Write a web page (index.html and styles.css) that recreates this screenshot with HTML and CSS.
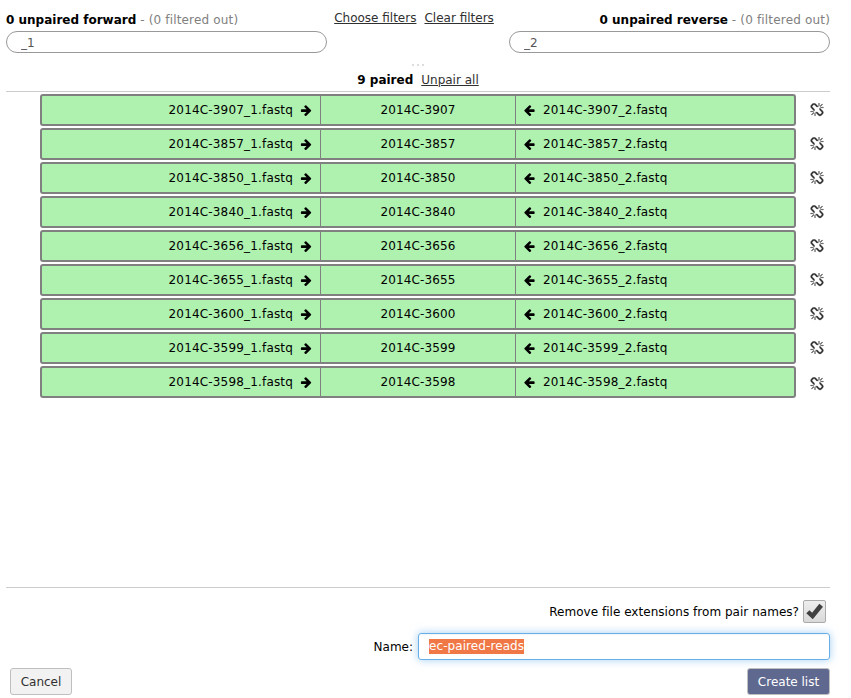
FILE: index.html
```html
<!DOCTYPE html>
<html lang="en">
<head>
<meta charset="utf-8">
<title>Paired list</title>
<link rel="stylesheet" href="styles.css">
</head>
<body>
<svg class="sprites" aria-hidden="true">
  <symbol id="arrow" viewBox="0 0 1792 1792"><path d="M1600 960q0 54-37 91l-651 651q-39 37-91 37-51 0-90-37l-75-75q-38-38-38-91t38-91l293-293h-704q-52 0-84.500-37.500t-32.500-90.500v-128q0-53 32.500-90.500t84.500-37.500h704l-293-294q-38-36-38-90t38-90l75-75q38-38 90-38 53 0 91 38l651 651q37 35 37 90z"/></symbol>
  <symbol id="unlink" viewBox="0 0 1792 1792"><path d="M503 1271l-256 256q-10 9-23 9-12 0-23-9-9-10-9-23t9-23l256-256q10-9 23-9t23 9q9 10 9 23t-9 23zm169 41v320q0 14-9 23t-23 9-23-9-9-23v-320q0-14 9-23t23-9 23 9 9 23zm-224-224q0 14-9 23t-23 9h-320q-14 0-23-9t-9-23 9-23 23-9h320q14 0 23 9t9 23zm1264 128q0 120-85 203l-147 146q-83 83-203 83-121 0-204-85l-334-335q-21-21-42-56l239-18 273 274q27 27 68 27.500t68-26.500l147-146q28-28 28-67 0-40-28-68l-274-275 18-239q35 21 56 42l336 336q84 86 84 204zm-617-724l-239 18-273-274q-28-28-68-28-39 0-68 27l-147 146q-28 28-28 67 0 40 28 68l274 274-18 240q-35-21-56-42l-336-336q-84-86-84-204 0-120 85-203l147-146q83-83 203-83 121 0 204 85l334 335q21 21 42 56zm633 84q0 14-9 23t-23 9h-320q-14 0-23-9t-9-23 9-23 23-9h320q14 0 23 9t9 23zm-544-544v320q0 14-9 23t-23 9-23-9-9-23v-320q0-14 9-23t23-9 23 9 9 23zm407 151l-256 256q-11 9-23 9t-23-9q-9-10-9-23t9-23l256-256q10-9 23-9t23 9q9 10 9 23t-9 23z"/></symbol>
</svg>
<main class="creator">
  <header class="filters">
    <div class="column">
      <div class="title"><b>0 unpaired forward</b> <span class="muted">- (0 filtered out)</span></div>
      <input class="search" type="text" value="_1" aria-label="Forward filter">
    </div>
    <div class="links"><a href="#">Choose filters</a><a href="#">Clear filters</a></div>
    <div class="column reverse">
      <div class="title"><b>0 unpaired reverse</b> <span class="muted">- (0 filtered out)</span></div>
      <input class="search" type="text" value="_2" aria-label="Reverse filter">
    </div>
  </header>
  <div class="grip"><i></i><i></i><i></i></div>
  <div class="paired-title"><b>9 paired</b><a href="#">Unpair all</a></div>
  <ol class="pairs" id="pairs"></ol>
  <footer class="footer">
    <label class="option">Remove file extensions from pair names?
      <span class="check"><svg viewBox="0 0 23 23"><path d="M2.500 13.500 6 10 8.900 12.800 16.800 3 20.800 6.400 9.600 20Z"/></svg></span>
    </label>
    <div class="name-row"><span>Name:</span><div class="name" role="textbox"><span class="selected">ec-paired-reads</span></div></div>
    <div class="actions"><button class="button">Cancel</button><button class="button primary">Create list</button></div>
  </footer>
</main>
<script src="pairs.js"></script>
</body>
</html>
```
FILE: styles.css
```css
* { box-sizing: border-box; }

body {
  margin: 0;
  background: #fff;
  color: #000;
  font: 12px/18px "DejaVu Sans", sans-serif;
}

a { color: #303030; text-decoration: underline; }

.sprites { display: none; }

.creator {
  display: flex;
  flex-direction: column;
  width: 824px;
  height: 698px;
  margin-left: 6px;
}

.filters {
  display: flex;
  justify-content: space-between;
  height: 62px;
  padding-top: 11px;
}

.column { width: 321px; }
.reverse .title { text-align: right; }
.title { height: 20px; }
.muted { color: #808080; letter-spacing: .17px; }

.search {
  display: block;
  width: 321px;
  height: 22px;
  padding: 1px 14px 0;
  border: 1px solid #999;
  border-radius: 11px;
  background: #fff;
  color: #555;
  font: inherit;
}

.links {
  display: flex;
  gap: 8px;
  margin: -2px 8px 0 0;
}

.grip {
  display: flex;
  justify-content: center;
  gap: 3px;
  height: 9px;
  padding-top: 2px;
}

.grip i { width: 2px; height: 2px; background: #ddd; }

.paired-title {
  display: flex;
  justify-content: center;
  gap: 8px;
  height: 20px;
}

.pairs {
  flex: 1;
  margin: 0;
  padding: 0;
  border-top: 1px solid #ccc;
  list-style: none;
}

.pair { display: flex; align-items: center; margin: 2px 0 0 34px; }

.files {
  display: grid;
  grid-template-columns: 278px 196px 278px;
  width: 756px;
  height: 32px;
  border: 2px solid #808080;
  border-radius: 3px;
  background: #aff1af;
  line-height: 28px;
  letter-spacing: .17px;
}

.files > span { display: flex; align-items: center; }
.files .forward { justify-content: flex-end; gap: 7px; padding-right: 7.5px; }
.files .pair-name { justify-content: center; border: solid #808080; border-width: 0 1px; letter-spacing: .1px; }
.files .backward { gap: 7.5px; padding-left: 7px; }
.arrow { width: 12.5px; height: 12.5px; }
.backward .arrow { transform: scaleX(-1); }

.unlink {
  width: 14px;
  height: 14px;
  margin-left: 14px;
  fill: #303030;
  stroke: #303030;
  stroke-width: 40px;
}
.pair:last-child .unlink { margin-top: 4px; }

.footer { height: 111px; border-top: 1px solid #ccc; }

.option {
  display: flex;
  align-items: center;
  justify-content: flex-end;
  gap: 4px;
  height: 23px;
  margin: 12px 4px 0 0;
  letter-spacing: .03px;
}

.check {
  width: 23px;
  height: 23px;
  border: 1px solid #aaa;
  border-radius: 2px;
  background: linear-gradient(#eee, #d9d9d9);
}

.check svg { display: block; width: 21px; height: 21px; fill: #404040; }

.name-row {
  display: flex;
  align-items: center;
  justify-content: flex-end;
  gap: 5px;
  margin-top: 10px;
}

.name {
  width: 412px;
  height: 27px;
  padding: 5px 10px;
  border: 1px solid #66afe9;
  border-radius: 3px;
  box-shadow: inset 0 1px 1px rgba(0, 0, 0, .04), 0 0 8px rgba(102, 175, 233, .6);
  line-height: 15px;
}

.selected { display: inline-block; background: #f07746; color: #fff; letter-spacing: .08px; }

.actions {
  display: flex;
  justify-content: space-between;
  margin: 8px 0 0 4px;
}

.button {
  width: 62px;
  height: 27px;
  padding: 0;
  border: 1px solid #bfbfbf;
  border-radius: 3px;
  background: #f2f2f2;
  color: #303030;
  font: inherit;
}

.primary { width: 83px; background: #5f6990; color: #fff; }
```
FILE: pairs.js
```js
const names = ["3907", "3857", "3850", "3840", "3656", "3655", "3600", "3599", "3598"];
const arrow = '<svg class="arrow"><use href="#arrow"/></svg>';

document.getElementById("pairs").innerHTML = names.map((n) => `
  <li class="pair">
    <div class="files">
      <span class="forward">2014C-${n}_1.fastq ${arrow}</span>
      <span class="pair-name">2014C-${n}</span>
      <span class="backward">${arrow} 2014C-${n}_2.fastq</span>
    </div>
    <svg class="unlink"><use href="#unlink"/></svg>
  </li>`).join("");
```
